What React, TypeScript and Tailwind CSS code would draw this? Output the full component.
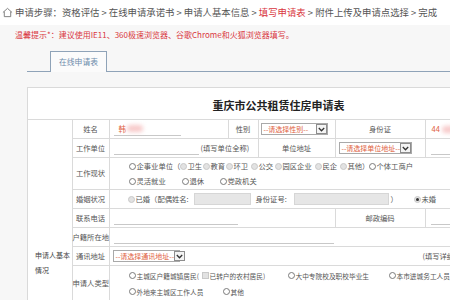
import React from 'react';

const Radio = ({ disabled, checked }: { disabled?: boolean; checked?: boolean }) => (
  <span
    className={
      disabled
        ? 'inline-flex w-[7px] h-[7px] shrink-0 rounded-full border border-[#c9c9c9] bg-[#e2e2e2] mr-[1px] items-center justify-center'
        : 'inline-flex w-[7px] h-[7px] shrink-0 rounded-full border border-[#7a7a7a] bg-white mr-[1px] items-center justify-center'
    }
  >
    {checked && <span className="w-[3px] h-[3px] rounded-full bg-[#333]" />}
  </span>
);

const Opt = ({ label, disabled, checked, className }: { label: string; disabled?: boolean; checked?: boolean; className?: string }) => (
  <span className={'inline-flex items-center whitespace-nowrap ' + (className || '')}>
    <Radio disabled={disabled} checked={checked} />
    {label}
  </span>
);

const Select = ({ text, width }: { text: string; width: string }) => (
  <div className={'shrink-0 flex items-center justify-between h-[12px] border border-[#a9a9a9] bg-white ' + width}>
    <span className="pl-[2px] text-[7px] leading-none text-[#e0603c] whitespace-nowrap">{text}</span>
    <span className="shrink-0 w-[11px] h-[10px] border border-[#8d8d8d] bg-[#f4f4f4] flex items-center justify-center">
      <svg width="7" height="5" viewBox="0 0 7 5">
        <path d="M0.8 1 L3.5 3.8 L6.2 1" fill="none" stroke="#333" strokeWidth="1.3" />
      </svg>
    </span>
  </div>
);

const GrayBox = ({ width }: { width: string }) => (
  <span className={'inline-block h-[12px] bg-[#e6e6e6] border border-[#d6d6d6] ' + width} />
);

const td = 'border border-[#dadada] p-0';
const label = 'border border-[#dadada] p-0 text-center text-[7.3px] text-[#555] whitespace-nowrap';

export default function App() {
  return (
    <div className="w-[450px] h-[300px] overflow-hidden bg-[#f7f7f7] text-[#444] font-['Noto_Sans_CJK_SC',sans-serif]">
      {/* breadcrumb */}
      <div className="h-[25px] bg-white flex items-center pl-[2px] text-[9.4px] text-[#555] whitespace-nowrap">
        <svg width="11" height="11" viewBox="0 0 12 12" className="mr-[2px]">
          <path d="M1 6 L6 1.5 L11 6 M2.5 5 V10.5 H9.5 V5" fill="none" stroke="#777" strokeWidth="1" />
        </svg>
        <span>
          申请步骤：资格评估 &gt; 在线申请承诺书 &gt; 申请人基本信息 &gt; <span className="text-[#d9363e]">填写申请表</span> &gt; 附件上传及申请点选择 &gt; 完成
        </span>
      </div>

      {/* warning */}
      <div className="h-[20px] flex items-center pl-[15px] text-[8px] text-[#d9363e] whitespace-nowrap">
        温馨提示*：建议使用IE11、360极速浏览器、谷歌Chrome和火狐浏览器填写。
      </div>

      {/* tabs */}
      <div className="ml-[27px] mt-[6px] flex border-b border-[#8fa3b8]">
        <div className="ml-[23px] w-[57px] h-[21px] -mb-[1px] bg-[#fbfbfb] border border-b-0 border-[#8fa3b8] flex items-center justify-center text-[7.8px] text-[#6d8bab]">
          在线申请表
        </div>
      </div>

      {/* form box */}
      <div className="ml-[27px] mt-[15px] w-[502px] bg-white border-t border-l border-[#dadada]">
        <div className="h-[31px] pt-[10px] text-center text-[11px] font-bold text-[#222] leading-[14px]">
          重庆市公共租赁住房申请表
        </div>
        <table className="w-[502px] table-fixed border-collapse">
          <colgroup>
            <col className="w-[44px]" />
            <col className="w-[37px]" />
            <col className="w-[119px]" />
            <col className="w-[30px]" />
            <col className="w-[77px]" />
            <col className="w-[90px]" />
            <col className="w-[105px]" />
          </colgroup>
          <tbody>
            <tr className="h-[19px]">
              <td rowSpan={8} className="border border-l-0 border-[#dadada] p-0 align-top">
                <div className="pt-[128px] pl-[7px] text-[7px] leading-[15px] text-[#444] whitespace-nowrap">
                  申请人基本
                  <br />
                  情况
                </div>
              </td>
              <td className={label}>姓名</td>
              <td className={td}>
                <div className="pl-[4px] flex items-center">
                  <div className="w-[67px] h-[14px] border-b border-[#c8c8c8] flex items-center pl-[5px] text-[7.5px] text-[#e0603c]">
                    韩<span className="ml-[1px] w-[16px] h-[7px] rounded-full bg-[#f7c9c9] blur-[2px]" />
                  </div>
                </div>
              </td>
              <td className={label}>性别</td>
              <td className={td}>
                <div className="pl-[2px] flex items-center">
                  <Select text="--请选择性别--" width="w-[67px]" />
                </div>
              </td>
              <td className={label}>身份证</td>
              <td className={td}>
                <div className="pl-[6px] flex items-center text-[7.5px] text-[#e0603c]">
                  44<span className="ml-[2px] w-[14px] h-[7px] rounded-full bg-[#f7c9c9] blur-[2px]" />
                </div>
              </td>
            </tr>
            <tr className="h-[19px]">
              <td className={label}>工作单位</td>
              <td colSpan={2} className={td}>
                <div className="pl-[4px] flex items-center text-[7.3px] text-[#555]">
                  <div className="w-[85px] h-[14px] border-b border-[#c8c8c8]" />
                  <span className="ml-[2px] whitespace-nowrap">(填写单位全称)</span>
                </div>
              </td>
              <td className={label}>单位地址</td>
              <td className={td}>
                <div className="pl-[3px] flex items-center">
                  <Select text="--请选择单位地址--" width="w-[73px]" />
                </div>
              </td>
              <td className={td}>
                <div className="pl-[5px]">
                  <div className="w-[90px] h-[14px] border-b border-[#c8c8c8]" />
                </div>
              </td>
            </tr>
            <tr className="h-[32px]">
              <td className={label}>工作现状</td>
              <td colSpan={5} className={td}>
                <div className="pl-[19px] text-[7.3px] text-[#555] leading-[15px]">
                  <div className="flex items-center whitespace-nowrap">
                    <Opt label="企事业单位（" className="w-[51px]" />
                    <Opt label="卫生" disabled className="w-[23px]" />
                    <Opt label="教育" disabled className="w-[23px]" />
                    <Opt label="环卫" disabled className="w-[25px]" />
                    <Opt label="公交" disabled className="w-[24px]" />
                    <Opt label="园区企业" disabled className="w-[40px]" />
                    <Opt label="民企" disabled className="w-[25px]" />
                    <Opt label="其他）" disabled className="w-[29px]" />
                    <Opt label="个体工商户" />
                  </div>
                  <div className="flex items-center whitespace-nowrap">
                    <Opt label="灵活就业" className="w-[53px]" />
                    <Opt label="退休" className="w-[38px]" />
                    <Opt label="党政机关" />
                  </div>
                </div>
              </td>
            </tr>
            <tr className="h-[19px]">
              <td className={label}>婚姻状况</td>
              <td colSpan={5} className={td}>
                <div className="pl-[18px] flex items-center text-[7.3px] text-[#555] whitespace-nowrap">
                  <Opt label="已婚（配偶姓名:" disabled className="w-[66px]" />
                  <GrayBox width="w-[57px]" />
                  <span className="ml-[5px] w-[38px]">身份证号:</span>
                  <GrayBox width="w-[95px]" />
                  <span className="ml-[2px] w-[23px]">）</span>
                  <Opt label="未婚" checked disabled />
                </div>
              </td>
            </tr>
            <tr className="h-[19px]">
              <td className={label}>联系电话</td>
              <td colSpan={3} className={td}>
                <div className="pl-[4px]">
                  <div className="w-[124px] h-[14px] border-b border-[#c8c8c8]" />
                </div>
              </td>
              <td className={label}>邮政编码</td>
              <td className={td}>
                <div className="pl-[5px]">
                  <div className="w-[90px] h-[14px] border-b border-[#c8c8c8]" />
                </div>
              </td>
            </tr>
            <tr className="h-[19px]">
              <td className={label}>户籍所在地</td>
              <td colSpan={5} className={td}>
                <div className="pl-[4px]">
                  <div className="w-[220px] h-[14px] border-b border-[#c8c8c8]" />
                </div>
              </td>
            </tr>
            <tr className="h-[19px]">
              <td className={label}>通讯地址</td>
              <td colSpan={5} className={td}>
                <div className="pl-[3px] flex items-center text-[7.3px] text-[#555] whitespace-nowrap">
                  <Select text="--请选择通讯地址--" width="w-[67px]" />
                  <span className="ml-[243px]">(填写详细地址)</span>
                </div>
              </td>
            </tr>
            <tr className="h-[36px]">
              <td className={label}>申请人类型</td>
              <td colSpan={5} className={td}>
                <div className="pl-[19px] text-[6.7px] text-[#555] leading-[16px]">
                  <div className="flex items-center whitespace-nowrap">
                    <Opt label="主城区户籍城镇居民(" className="w-[73px]" />
                    <span className="inline-flex items-center w-[86px]">
                      <span className="inline-block w-[7px] h-[7px] border border-[#c9c9c9] bg-[#e2e2e2] mr-[1px]" />
                      已转户的农村居民)
                    </span>
                    <Opt label="大中专院校及职校毕业生" className="w-[101px]" />
                    <Opt label="本市进城务工人员" />
                  </div>
                  <div className="flex items-center whitespace-nowrap">
                    <Opt label="外地来主城区工作人员" className="w-[94px]" />
                    <Opt label="其他" />
                  </div>
                </div>
              </td>
            </tr>
          </tbody>
        </table>
      </div>
    </div>
  );
}
